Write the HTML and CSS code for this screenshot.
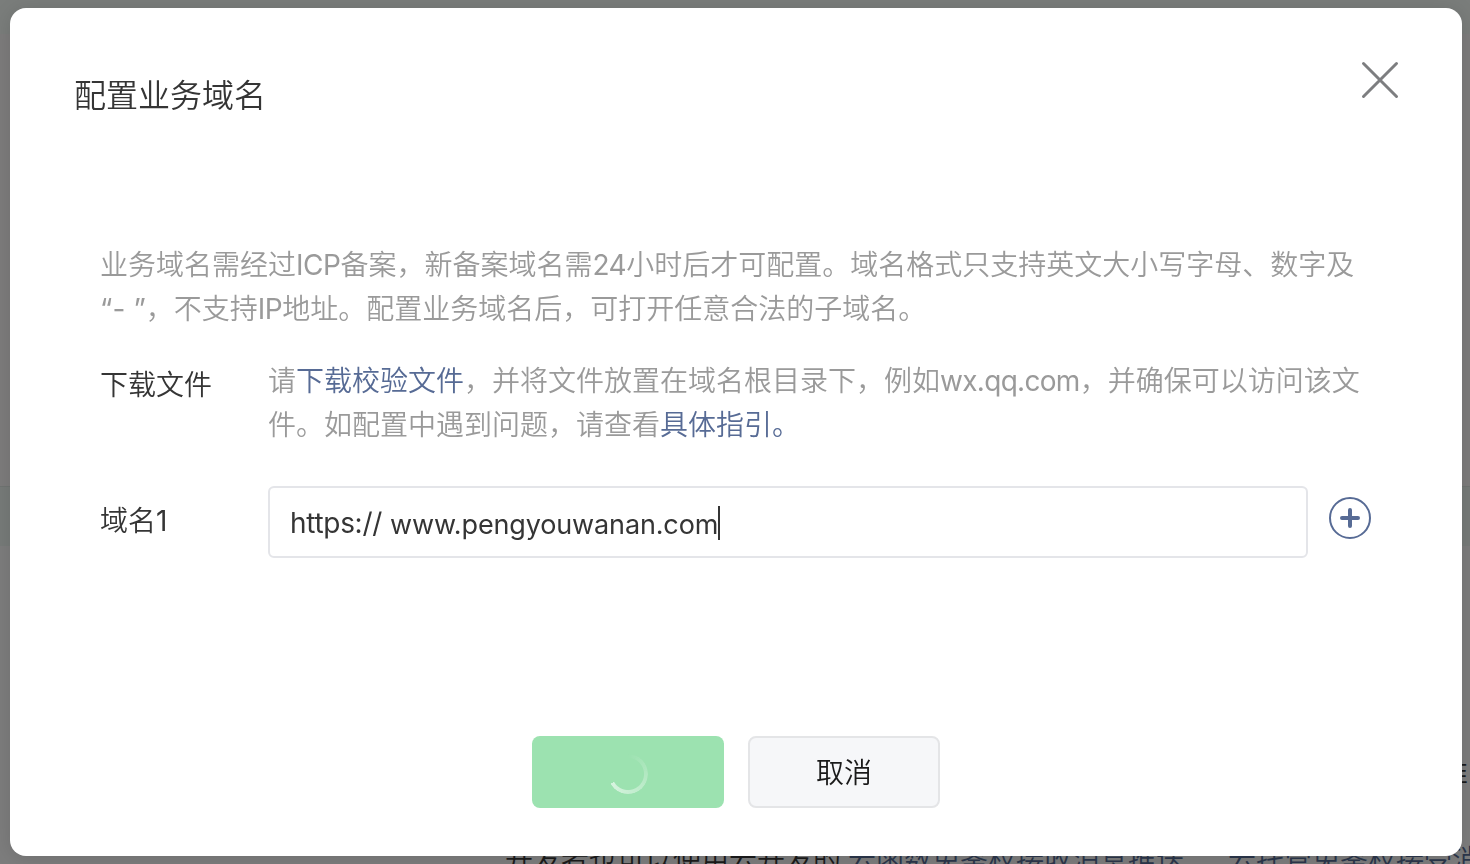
FILE: index.html
```
<!DOCTYPE html>
<html lang="zh-CN">
<head>
    <meta charset="UTF-8">
    <meta name="viewport" content="width=device-width, initial-scale=1.0">
    <title>配置业务域名</title>
    <link rel="stylesheet" href="styles.css">
</head>
<body>
    <div class="page">
        <div class="page-top"></div>
        <div class="page-panel"></div>
        <div class="page-head"></div>
        <div class="page-content">
            <p class="page-side">推</p>
            <p class="page-note">开发者也可以使用云开发的<a href="#" class="first-link">云函数免鉴权接收消息推送</a>、<a href="#" class="second-link">云托管免鉴权接受消</a></p>
        </div>
    </div>

    <div class="dialog">
        <div class="dialog-header">
            <h2>配置业务域名</h2>
            <svg class="close" width="40" height="40" viewBox="0 0 40 40">
                <path d="M3.5 3.5L36.5 36.5M36.5 3.5L3.5 36.5" fill="none" stroke="#7d7e80" stroke-width="3" stroke-linecap="round"/>
            </svg>
        </div>

        <div class="dialog-body">
            <p class="intro">业务域名需经过<span class="latin">ICP</span>备案，新备案域名需<span class="latin">24</span>小时后才可配置。域名格式只支持英文大小写字母、数字及<br><span class="quote">“- ”</span>，不支持<span class="latin">IP</span>地址。配置业务域名后，可打开任意合法的子域名。</p>

            <div class="row">
                <div class="label file-label">下载文件</div>
                <p class="tips">请<a href="#">下载校验文件</a>，并将文件放置在域名根目录下，例如<span class="site">wx.qq.com</span>，并确保可以访问该文<br>件。如配置中遇到问题，请查看<a href="#">具体指引。</a></p>
            </div>

            <div class="row domain-row">
                <div class="label">域名<span class="latin">1</span></div>
                <div class="input-box">
                    <span class="prefix">https://</span>
                    <span class="value">www.pengyouwanan.com</span>
                    <span class="caret"></span>
                </div>
                <svg class="add" width="42" height="42" viewBox="0 0 42 42">
                    <circle cx="21" cy="21" r="20" fill="none" stroke="#576b95" stroke-width="2"/>
                    <path d="M21 13v16M13 21h16" fill="none" stroke="#576b95" stroke-width="4" stroke-linecap="round"/>
                </svg>
            </div>
        </div>

        <div class="dialog-footer">
            <button class="btn btn-primary"><span class="spinner"></span></button>
            <button class="btn btn-default">取消</button>
        </div>
    </div>
</body>
</html>
```
FILE: styles.css
```
* {
    box-sizing: border-box;
}
body {
    margin: 0;
    height: 864px;
    overflow: hidden;
    font-family: Inter, "Noto Sans CJK SC", sans-serif;
    font-size: 28px;
    font-weight: 350;
    color: #353535;
}
h2, p {
    margin: 0;
}
a {
    color: #576b95;
    text-decoration: none;
}

/* page behind the dialog */
.page {
    height: 864px;
    overflow: hidden;
    background: #7d7d7d;
}
.page-top {
    height: 34px;
    background: #7a7d7b;
}
.page-panel {
    height: 452px;
    background: #7d7c7c;
}
.page-head {
    height: 60px;
    background: #777b79;
    border-top: 1px solid #707472;
}
.page-content {
    padding-top: 205px;
    color: #1b1b1b;
    line-height: 44px;
    white-space: nowrap;
}
.page-content a {
    color: #2b364b;
}
.page-side {
    padding-left: 1440px;
}
.page-note {
    padding: 43px 0 0 505px;
}
.first-link {
    margin-left: 7px;
}
.second-link {
    margin-left: 16px;
}

.dialog {
    position: fixed;
    top: 8px;
    left: 10px;
    width: 1452px;
    height: 848px;
    background: #fff;
    border-radius: 16px;
    box-shadow: 0 2px 20px rgba(0, 0, 0, 0.12);
}
.dialog-header {
    display: flex;
    justify-content: space-between;
    height: 235px;
    padding: 52px 62px 0 64px;
}
.dialog-header h2 {
    padding-top: 12px;
    font-size: 32px;
    font-weight: 350;
    line-height: 48px;
}
.close {
    cursor: pointer;
}
.dialog-body {
    padding: 0 90px;
    white-space: nowrap;
}
.intro, .tips {
    color: #9a9a9a;
    line-height: 44px;
}
.intro {
    margin-bottom: 28px;
}
.latin {
    font-weight: 400;
    letter-spacing: -0.5px;
}
.quote {
    font-weight: 400;
    letter-spacing: 0.1px;
}
.site {
    font-weight: 400;
    letter-spacing: -0.7px;
}
.row {
    display: flex;
}
.label {
    width: 168px;
    flex-shrink: 0;
    line-height: 44px;
}
.file-label {
    padding-top: 4px;
}
.domain-row {
    align-items: center;
    margin-top: 39px;
}
.domain-row .label {
    padding-bottom: 2px;
}
.input-box {
    display: flex;
    align-items: center;
    width: 1040px;
    height: 72px;
    padding: 2px 20px 0;
    border: 2px solid #e4e5e9;
    border-radius: 6px;
    flex-shrink: 0;
    font-weight: 400;
}
.prefix {
    letter-spacing: -0.3px;
}
.value {
    margin: 3px 0 0 8px;
    font-size: 27px;
    letter-spacing: -0.14px;
}
.caret {
    width: 2px;
    height: 34px;
    background: #353535;
}
.add {
    margin: 0 0 8px 21px;
    flex-shrink: 0;
    cursor: pointer;
}
.dialog-footer {
    display: flex;
    justify-content: center;
    gap: 24px;
    margin-top: 178px;
}
.btn {
    display: flex;
    align-items: center;
    justify-content: center;
    width: 192px;
    height: 72px;
    padding: 0;
    border: none;
    border-radius: 8px;
    font-family: inherit;
    font-size: 28px;
    font-weight: 350;
    cursor: pointer;
}
.btn-primary {
    background: #9ce2b0;
}
.btn-default {
    padding-bottom: 2px;
    background: #f6f7f9;
    border: 2px solid #e4e5e7;
    color: #1a1a1a;
}
.spinner {
    width: 40px;
    height: 40px;
    margin-top: 4px;
    border-radius: 50%;
    background: conic-gradient(rgba(255, 255, 255, 0), rgba(255, 255, 255, 0.6) 240deg, transparent 241deg);
    -webkit-mask: radial-gradient(circle, transparent 15.5px, #000 16.5px);
    mask: radial-gradient(circle, transparent 15.5px, #000 16.5px);
}
```
